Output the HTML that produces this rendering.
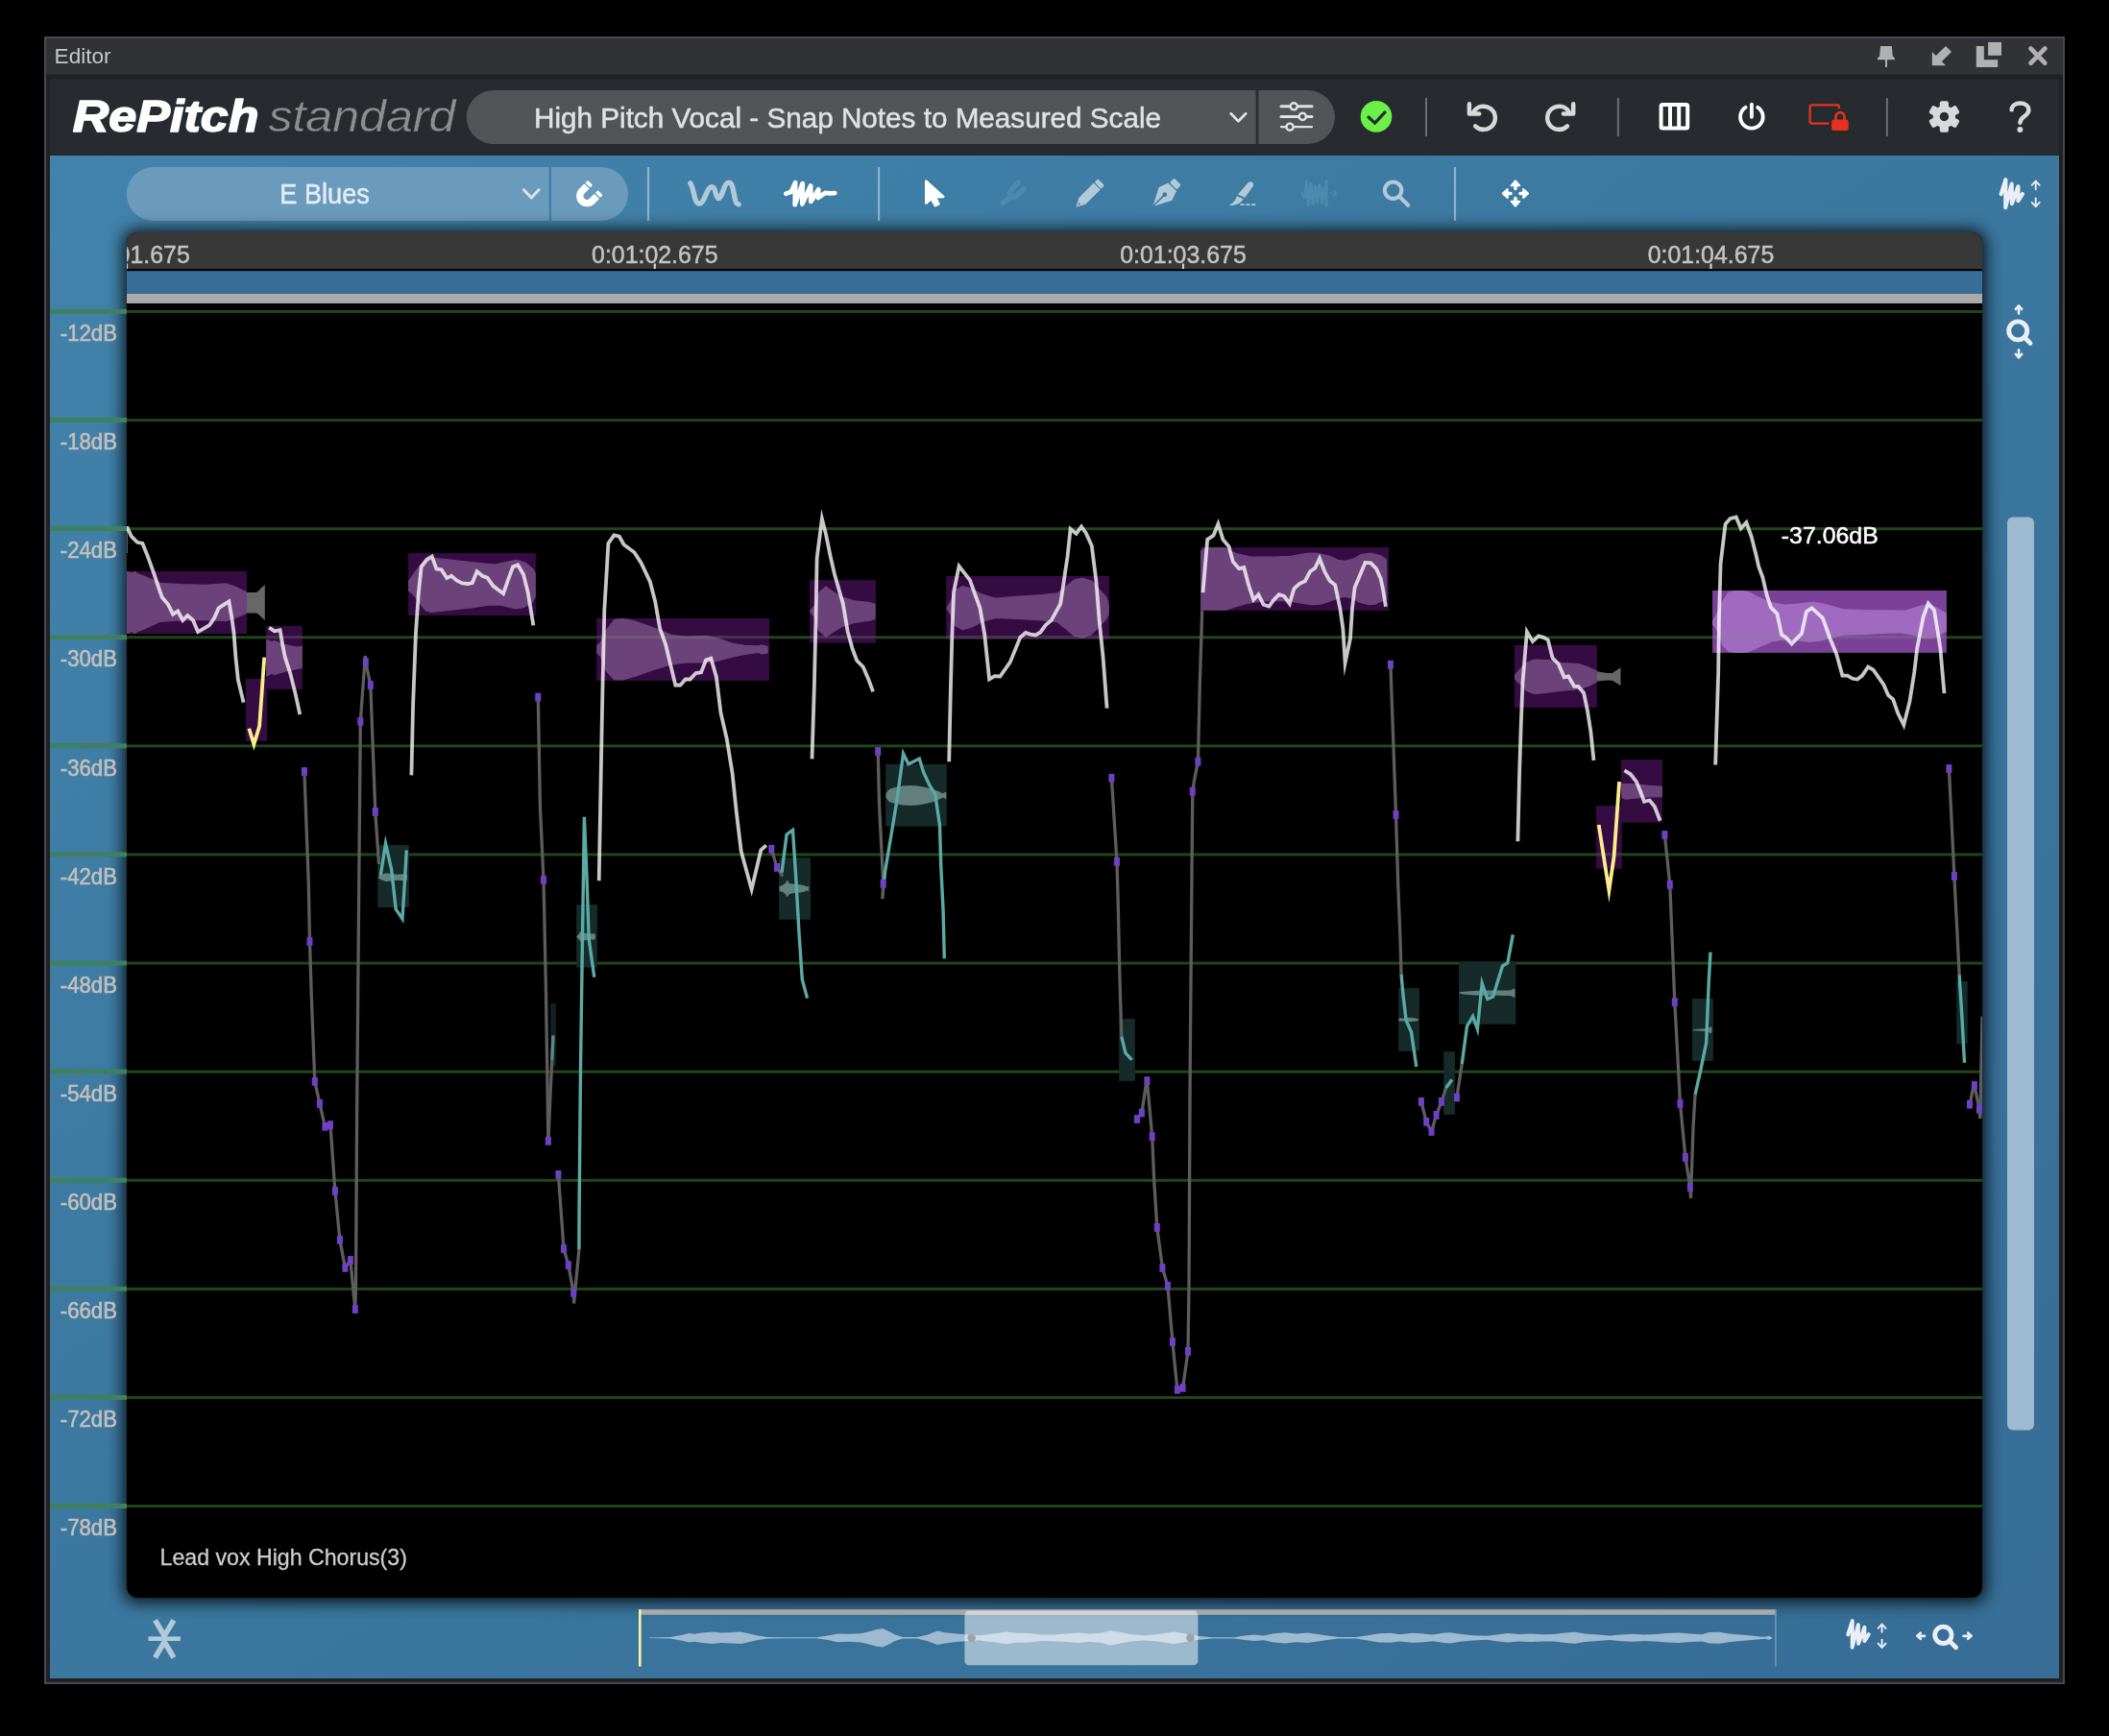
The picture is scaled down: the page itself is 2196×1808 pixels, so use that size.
<!DOCTYPE html>
<html><head><meta charset="utf-8"><title>Editor</title>
<style>html,body{margin:0;padding:0;background:#000;}svg{display:block;}</style>
</head><body>
<svg width="2196" height="1808" viewBox="0 0 2196 1808" font-family='"Liberation Sans", sans-serif'>
<defs>
<linearGradient id="blueg" x1="0" y1="0" x2="1" y2="1">
<stop offset="0" stop-color="#4283ab"/><stop offset="0.5" stop-color="#3b779f"/><stop offset="1" stop-color="#376d96"/>
</linearGradient>
<filter id="blur8" x="-5%" y="-5%" width="110%" height="110%"><feGaussianBlur stdDeviation="8.5"/></filter>
<clipPath id="plotclip"><rect x="132" y="242" width="1932" height="1422" rx="11" ry="11"/></clipPath>
<clipPath id="rulerclip"><rect x="132" y="242" width="1932" height="40"/></clipPath>
</defs>
<rect width="2196" height="1808" fill="#000"/>

<rect x="46" y="38" width="2104" height="1716" fill="#46494e"/>
<rect x="48" y="40" width="2100" height="1712" fill="#1f2123"/>
<rect x="48" y="40" width="2100" height="37.5" fill="#303236"/>
<text x="56.6" y="65.9" font-size="22" fill="#c9c9c9" text-anchor="start" opacity="0.995" font-weight="normal" font-style="normal" textLength="59" lengthAdjust="spacingAndGlyphs">Editor</text>
<rect x="52" y="82" width="2092" height="80" fill="#272b2f"/>
<rect x="52" y="162" width="2092" height="1586" fill="url(#blueg)"/>
<text x="75.7" y="137.4" font-size="46.3" fill="#ffffff" text-anchor="start" opacity="0.995" font-weight="bold" font-style="italic" textLength="194" lengthAdjust="spacingAndGlyphs" stroke="#fff" stroke-width="1.5" stroke-linejoin="round">RePitch</text>
<text x="279.4" y="136.8" font-size="47" fill="#8f8f8f" text-anchor="start" opacity="0.995" font-weight="normal" font-style="italic" textLength="195" lengthAdjust="spacingAndGlyphs" stroke="#272b2f" stroke-width="0.4" paint-order="fill">standard</text>
<rect x="485.7" y="94" width="904.3" height="56" rx="28" fill="#515557"/>
<rect x="1307.5" y="94" width="3" height="56" fill="#2b2e31"/>
<text x="556" y="132.8" font-size="30" fill="#e2e2e2" text-anchor="start" opacity="0.995" font-weight="normal" font-style="normal" textLength="653" lengthAdjust="spacingAndGlyphs" stroke="#e2e2e2" stroke-width="0.5">High Pitch Vocal - Snap Notes to Measured Scale</text>
<rect x="131.8" y="174" width="522.2" height="56" rx="28" fill="#6a9bbc"/>
<rect x="571.8" y="174" width="2.2" height="56" fill="#3f7ca5"/>
<text x="291.3" y="212" font-size="30" fill="#e4edf4" text-anchor="start" opacity="0.995" font-weight="normal" font-style="normal" textLength="93.6" lengthAdjust="spacingAndGlyphs" stroke="#e4edf4" stroke-width="0.5">E Blues</text>
<rect x="1484" y="102" width="2" height="40" fill="#6b6e71"/>
<rect x="1683.9" y="102" width="2" height="40" fill="#6b6e71"/>
<rect x="1963.9" y="102" width="2" height="40" fill="#6b6e71"/>
<rect x="673.9" y="174" width="2.2" height="56" fill="#8fb3cc"/>
<rect x="914" y="174" width="2.2" height="56" fill="#8fb3cc"/>
<rect x="1513.9" y="174" width="2.2" height="56" fill="#8fb3cc"/>
<rect x="129" y="240" width="1938" height="1428" rx="13" fill="#000" opacity="0.9" filter="url(#blur8)"/>
<g clip-path="url(#plotclip)">
<rect x="132" y="242" width="1932" height="1422" fill="#000"/>
<rect x="132" y="242" width="1932" height="38" fill="#383838"/>
<rect x="132" y="280" width="1932" height="2.2" fill="#000"/>
<rect x="132" y="282.2" width="1932" height="24" fill="#376d97"/>
<rect x="132" y="306" width="1932" height="10" fill="#aaaaaa"/>
</g>
<g clip-path="url(#rulerclip)">
<rect x="130.9" y="274.5" width="2.2" height="5.6" fill="#d0d0d0"/>
<text x="132" y="274.3" font-size="26" fill="#c4c4c4" text-anchor="middle" opacity="0.995" font-weight="normal" font-style="normal" textLength="131.5" lengthAdjust="spacingAndGlyphs" stroke="#c4c4c4" stroke-width="0.5">0:01:01.675</text>
<rect x="680.6999999999999" y="274.5" width="2.2" height="5.6" fill="#d0d0d0"/>
<text x="681.8" y="274.3" font-size="26" fill="#c4c4c4" text-anchor="middle" opacity="0.995" font-weight="normal" font-style="normal" textLength="131.5" lengthAdjust="spacingAndGlyphs" stroke="#c4c4c4" stroke-width="0.5">0:01:02.675</text>
<rect x="1230.9" y="274.5" width="2.2" height="5.6" fill="#d0d0d0"/>
<text x="1232" y="274.3" font-size="26" fill="#c4c4c4" text-anchor="middle" opacity="0.995" font-weight="normal" font-style="normal" textLength="131.5" lengthAdjust="spacingAndGlyphs" stroke="#c4c4c4" stroke-width="0.5">0:01:03.675</text>
<rect x="1780.4" y="274.5" width="2.2" height="5.6" fill="#d0d0d0"/>
<text x="1781.5" y="274.3" font-size="26" fill="#c4c4c4" text-anchor="middle" opacity="0.995" font-weight="normal" font-style="normal" textLength="131.5" lengthAdjust="spacingAndGlyphs" stroke="#c4c4c4" stroke-width="0.5">0:01:04.675</text>
</g>
<rect x="52" y="321.9" width="80" height="5" fill="#3f8060"/>
<text x="62.8" y="355.1" font-size="24" fill="#c6c0bc" text-anchor="start" opacity="0.995" font-weight="normal" font-style="normal" textLength="59.2" lengthAdjust="spacingAndGlyphs" stroke="#c6c0bc" stroke-width="0.6">-12dB</text>
<rect x="52" y="435.0" width="80" height="5" fill="#3f8060"/>
<text x="62.8" y="468.2" font-size="24" fill="#c6c0bc" text-anchor="start" opacity="0.995" font-weight="normal" font-style="normal" textLength="59.2" lengthAdjust="spacingAndGlyphs" stroke="#c6c0bc" stroke-width="0.6">-18dB</text>
<rect x="52" y="548.1" width="80" height="5" fill="#3f8060"/>
<text x="62.8" y="581.3" font-size="24" fill="#c6c0bc" text-anchor="start" opacity="0.995" font-weight="normal" font-style="normal" textLength="59.2" lengthAdjust="spacingAndGlyphs" stroke="#c6c0bc" stroke-width="0.6">-24dB</text>
<rect x="52" y="661.2" width="80" height="5" fill="#3f8060"/>
<text x="62.8" y="694.4" font-size="24" fill="#c6c0bc" text-anchor="start" opacity="0.995" font-weight="normal" font-style="normal" textLength="59.2" lengthAdjust="spacingAndGlyphs" stroke="#c6c0bc" stroke-width="0.6">-30dB</text>
<rect x="52" y="774.3" width="80" height="5" fill="#3f8060"/>
<text x="62.8" y="807.5" font-size="24" fill="#c6c0bc" text-anchor="start" opacity="0.995" font-weight="normal" font-style="normal" textLength="59.2" lengthAdjust="spacingAndGlyphs" stroke="#c6c0bc" stroke-width="0.6">-36dB</text>
<rect x="52" y="887.4" width="80" height="5" fill="#3f8060"/>
<text x="62.8" y="920.6" font-size="24" fill="#c6c0bc" text-anchor="start" opacity="0.995" font-weight="normal" font-style="normal" textLength="59.2" lengthAdjust="spacingAndGlyphs" stroke="#c6c0bc" stroke-width="0.6">-42dB</text>
<rect x="52" y="1000.5" width="80" height="5" fill="#3f8060"/>
<text x="62.8" y="1033.7" font-size="24" fill="#c6c0bc" text-anchor="start" opacity="0.995" font-weight="normal" font-style="normal" textLength="59.2" lengthAdjust="spacingAndGlyphs" stroke="#c6c0bc" stroke-width="0.6">-48dB</text>
<rect x="52" y="1113.6" width="80" height="5" fill="#3f8060"/>
<text x="62.8" y="1146.8" font-size="24" fill="#c6c0bc" text-anchor="start" opacity="0.995" font-weight="normal" font-style="normal" textLength="59.2" lengthAdjust="spacingAndGlyphs" stroke="#c6c0bc" stroke-width="0.6">-54dB</text>
<rect x="52" y="1226.7" width="80" height="5" fill="#3f8060"/>
<text x="62.8" y="1259.9" font-size="24" fill="#c6c0bc" text-anchor="start" opacity="0.995" font-weight="normal" font-style="normal" textLength="59.2" lengthAdjust="spacingAndGlyphs" stroke="#c6c0bc" stroke-width="0.6">-60dB</text>
<rect x="52" y="1339.8" width="80" height="5" fill="#3f8060"/>
<text x="62.8" y="1373.0" font-size="24" fill="#c6c0bc" text-anchor="start" opacity="0.995" font-weight="normal" font-style="normal" textLength="59.2" lengthAdjust="spacingAndGlyphs" stroke="#c6c0bc" stroke-width="0.6">-66dB</text>
<rect x="52" y="1452.9" width="80" height="5" fill="#3f8060"/>
<text x="62.8" y="1486.1" font-size="24" fill="#c6c0bc" text-anchor="start" opacity="0.995" font-weight="normal" font-style="normal" textLength="59.2" lengthAdjust="spacingAndGlyphs" stroke="#c6c0bc" stroke-width="0.6">-72dB</text>
<rect x="52" y="1566.0" width="80" height="5" fill="#3f8060"/>
<text x="62.8" y="1599.2" font-size="24" fill="#c6c0bc" text-anchor="start" opacity="0.995" font-weight="normal" font-style="normal" textLength="59.2" lengthAdjust="spacingAndGlyphs" stroke="#c6c0bc" stroke-width="0.6">-78dB</text>
<g clip-path="url(#plotclip)">
<rect x="132" y="323.0" width="1932" height="3" fill="#1f4619"/>
<rect x="132" y="436.1" width="1932" height="3" fill="#1f4619"/>
<rect x="132" y="549.2" width="1932" height="3" fill="#1f4619"/>
<rect x="132" y="662.3" width="1932" height="3" fill="#1f4619"/>
<rect x="132" y="775.4" width="1932" height="3" fill="#1f4619"/>
<rect x="132" y="888.5" width="1932" height="3" fill="#1f4619"/>
<rect x="132" y="1001.6" width="1932" height="3" fill="#1f4619"/>
<rect x="132" y="1114.7" width="1932" height="3" fill="#1f4619"/>
<rect x="132" y="1227.8" width="1932" height="3" fill="#1f4619"/>
<rect x="132" y="1340.9" width="1932" height="3" fill="#1f4619"/>
<rect x="132" y="1454.0" width="1932" height="3" fill="#1f4619"/>
<rect x="132" y="1567.1" width="1932" height="3" fill="#1f4619"/>
<rect x="132" y="595" width="125.0" height="65.0" fill="#350c42"/>
<clipPath id="bc132"><rect x="132" y="595" width="125.0" height="65.0"/></clipPath>
<g clip-path="url(#bc132)"><polygon points="132.0,595.0 137.7,597.2 140.2,594.7 142.1,597.2 150.3,600.4 166.8,607.4 188.4,608.7 213.7,609.3 235.3,607.8 245.4,611.2 257.0,616.9 257.0,638.4 245.4,643.5 235.3,646.7 213.7,645.4 188.4,646.0 166.8,647.3 150.3,654.9 142.1,658.1 140.2,660.6 137.7,657.4 132.0,660.6" fill="#6c427b" stroke="#6c427b" stroke-width="1.2" stroke-linejoin="round"/></g>
<polygon points="257.0,616.9 265.7,616.9 268.2,616.3 275.8,608.7 275.8,646.0 268.2,639.1 265.7,638.4 257.0,638.4" fill="#676767"/>
<rect x="277.1" y="652" width="37.7" height="65.9" fill="#350c42"/>
<clipPath id="bc277"><rect x="277.1" y="652" width="37.7" height="65.9"/></clipPath>
<g clip-path="url(#bc277)"><polygon points="277.1,666.3 283.4,668.8 285.3,667.6 296.1,671.4 308.8,674.2 314.8,673.3 314.8,695.5 308.8,696.7 296.1,699.3 285.3,702.4 283.4,701.2 277.1,704.3" fill="#6c427b" stroke="#6c427b" stroke-width="1.2" stroke-linejoin="round"/></g>
<rect x="425.1" y="576.1" width="132.7" height="64.9" fill="#350c42"/>
<clipPath id="bc425"><rect x="425.1" y="576.1" width="132.7" height="64.9"/></clipPath>
<g clip-path="url(#bc425)"><polygon points="425.4,605.5 432.1,596.0 439.7,586.6 449.1,581.2 462.4,582.4 490.9,585.6 515.5,588.1 528.8,585.0 538.3,583.3 547.8,586.6 555.3,593.2 557.8,597.9 557.8,620.7 553.5,628.3 544.0,633.0 536.4,633.6 521.2,630.2 509.8,629.8 490.9,633.0 471.9,634.9 449.1,637.4 443.4,635.9 435.9,626.4 430.2,618.8 425.4,615.0" fill="#6c427b" stroke="#6c427b" stroke-width="1.2" stroke-linejoin="round"/></g>
<rect x="621.2" y="644" width="179.8" height="64.9" fill="#350c42"/>
<clipPath id="bc621"><rect x="621.2" y="644" width="179.8" height="64.9"/></clipPath>
<g clip-path="url(#bc621)"><polygon points="621.2,672.8 625.5,669.1 631.2,656.7 639.8,645.3 648.3,644.4 661.6,647.2 680.5,653.9 699.5,661.5 714.7,663.4 735.5,662.4 748.8,665.3 762.1,670.0 775.4,672.3 789.6,672.8 792.4,671.9 799.1,673.4 799.1,680.1 792.4,680.8 789.6,679.5 775.4,681.4 762.1,684.2 748.8,688.0 735.5,689.9 714.7,689.9 699.5,691.8 680.5,697.5 661.6,704.1 648.3,707.9 639.8,707.9 631.2,698.5 625.5,683.3 621.2,679.5" fill="#6c427b" stroke="#6c427b" stroke-width="1.2" stroke-linejoin="round"/></g>
<rect x="843.1" y="604.2" width="68.8" height="65.4" fill="#350c42"/>
<clipPath id="bc843"><rect x="843.1" y="604.2" width="68.8" height="65.4"/></clipPath>
<g clip-path="url(#bc843)"><polygon points="843.1,636.4 847.9,631.6 852.7,617.1 860.0,611.0 867.2,616.3 876.9,622.2 889.8,625.9 905.9,627.6 911.1,629.2 911.1,644.5 905.9,646.1 889.8,648.5 876.9,652.5 867.2,658.2 860.0,663.0 852.7,656.6 847.9,642.1" fill="#6c427b" stroke="#6c427b" stroke-width="1.2" stroke-linejoin="round"/></g>
<rect x="985.2" y="600" width="169.8" height="65.9" fill="#350c42"/>
<clipPath id="bc985"><rect x="985.2" y="600" width="169.8" height="65.9"/></clipPath>
<g clip-path="url(#bc985)"><polygon points="985.7,633.2 989.8,626.8 994.6,614.7 1002.7,610.6 1010.7,613.0 1022.0,618.7 1036.5,623.2 1060.7,621.1 1084.9,619.5 1101.0,617.9 1109.1,611.4 1118.7,603.9 1126.8,602.2 1136.5,605.0 1144.5,613.9 1151.8,621.9 1154.2,630.0 1154.2,639.6 1151.8,644.5 1144.5,652.5 1136.5,660.6 1126.8,664.2 1118.7,662.2 1109.1,654.2 1101.0,647.7 1084.9,645.8 1060.7,644.5 1036.5,643.4 1022.0,647.7 1010.7,653.4 1002.7,655.8 994.6,651.7 989.8,639.6" fill="#6c427b" stroke="#6c427b" stroke-width="1.2" stroke-linejoin="round"/></g>
<rect x="1250.1" y="570" width="195.9" height="65.8" fill="#350c42"/>
<clipPath id="bc1250"><rect x="1250.1" y="570" width="195.9" height="65.8"/></clipPath>
<g clip-path="url(#bc1250)"><polygon points="1250.1,574.4 1253.6,571.3 1264.0,568.7 1274.4,570.3 1286.9,576.5 1302.6,580.2 1323.5,580.2 1344.3,579.4 1360.0,576.3 1370.4,576.0 1384.0,579.1 1393.3,583.3 1400.6,584.3 1409.0,582.2 1417.3,577.6 1427.8,576.0 1438.2,579.1 1443.4,582.8 1443.9,623.5 1438.2,626.1 1431.9,629.2 1425.7,629.7 1415.3,627.1 1406.9,622.4 1398.6,621.4 1389.2,624.5 1375.6,629.2 1365.2,629.7 1354.8,628.1 1344.3,626.1 1328.7,625.5 1313.0,626.1 1297.4,628.7 1283.8,632.8 1271.3,637.0 1264.0,637.5 1258.8,635.5 1253.6,636.5 1250.1,635.5" fill="#6c427b" stroke="#6c427b" stroke-width="1.2" stroke-linejoin="round"/></g>
<rect x="1576.9" y="671.9" width="86.0" height="65.0" fill="#350c42"/>
<clipPath id="bc1576"><rect x="1576.9" y="671.9" width="86.0" height="65.0"/></clipPath>
<g clip-path="url(#bc1576)"><polygon points="1577.3,703.5 1583.0,696.6 1589.0,690.6 1597.6,687.1 1611.5,687.7 1627.0,690.6 1644.3,691.5 1654.6,695.3 1662.9,699.2 1662.9,709.6 1654.6,714.3 1644.3,717.7 1627.0,719.1 1611.5,721.2 1597.6,722.6 1589.0,719.1 1583.0,712.2 1577.3,707.0" fill="#6c427b" stroke="#6c427b" stroke-width="1.2" stroke-linejoin="round"/></g>
<polygon points="1662.9,699.2 1673.6,701.0 1678.8,701.0 1687.5,695.3 1687.5,713.9 1678.8,708.7 1673.6,708.4 1662.9,709.6" fill="#676767"/>
<rect x="1688" y="791.1" width="43.0" height="65.5" fill="#350c42"/>
<clipPath id="bc1688"><rect x="1688" y="791.1" width="43.0" height="65.5"/></clipPath>
<g clip-path="url(#bc1688)"><polygon points="1688.8,816.7 1699.6,816.7 1716.8,818.4 1731.0,819.3 1731.0,829.7 1716.8,830.0 1699.6,831.4 1692.6,832.2 1688.8,830.5" fill="#6c427b" stroke="#6c427b" stroke-width="1.2" stroke-linejoin="round"/></g>
<rect x="1783.1" y="615" width="243.8" height="64.9" fill="#7a4197"/>
<clipPath id="bc1783"><rect x="1783.1" y="615" width="243.8" height="64.9"/></clipPath>
<g clip-path="url(#bc1783)"><polygon points="1783.5,646.9 1788.5,638.4 1794.2,625.6 1799.9,617.0 1809.8,614.9 1819.8,616.3 1831.2,622.0 1844.0,627.7 1858.2,630.1 1872.4,629.1 1888.1,627.0 1900.9,629.5 1919.4,634.8 1940.7,635.5 1969.1,635.8 1983.4,636.2 1994.8,632.7 2006.1,629.8 2014.7,632.0 2023.2,636.9 2026.9,639.1 2026.9,656.9 2020.4,661.1 2011.8,664.7 2003.3,664.7 1991.9,661.1 1980.5,659.0 1969.1,659.0 1940.7,660.4 1919.4,661.1 1906.6,664.0 1895.2,667.5 1883.8,668.2 1872.4,666.8 1855.3,666.1 1844.0,668.2 1831.2,673.9 1819.8,678.9 1809.8,680.3 1799.9,678.2 1794.2,672.5 1788.5,656.9 1783.5,649.7" fill="#9f6abf" stroke="#9f6abf" stroke-width="1.2" stroke-linejoin="round"/></g>
<rect x="256" y="707" width="22.0" height="64.8" fill="#350c42"/>
<rect x="1662.1" y="839.1" width="26.7" height="65.5" fill="#350c42"/>
<rect x="277.1" y="662.0" width="37.7" height="3.2" fill="rgba(120,150,110,0.28)"/>
<rect x="621.2" y="662.0" width="179.8" height="3.2" fill="rgba(120,150,110,0.28)"/>
<rect x="843.1" y="662.0" width="68.8" height="3.2" fill="rgba(120,150,110,0.28)"/>
<rect x="985.2" y="662.0" width="169.8" height="3.2" fill="rgba(120,150,110,0.28)"/>
<rect x="1783.1" y="662.0" width="243.8" height="3.2" fill="rgba(120,150,110,0.28)"/>
<rect x="1662.1" y="888.2" width="26.7" height="3.2" fill="rgba(120,150,110,0.28)"/>
<rect x="393.2" y="880.1" width="32.7" height="64.9" fill="#152a29"/>
<polygon points="394.0,912.7 398.0,910.7 402.0,909.2 408.0,910.2 414.0,910.7 420.0,910.2 424.0,910.7 424.0,916.7 420.0,917.2 414.0,916.7 408.0,917.2 402.0,918.2 398.0,916.7 394.0,914.7" fill="#62807d"/>
<rect x="600.2" y="942.1" width="21.7" height="65.5" fill="#152a29"/>
<polygon points="600.5,975.0 603.0,972.5 605.0,969.5 607.0,971.5 612.0,972.0 616.0,972.5 619.0,972.0 620.0,974.5 620.0,976.5 619.0,979.0 616.0,978.5 612.0,979.0 607.0,979.5 605.0,981.5 603.0,978.5 600.5,976.0" fill="#62807d"/>
<rect x="811.1" y="893.2" width="32.9" height="64.6" fill="#152a29"/>
<polygon points="811.5,922.9 815.0,921.9 818.0,919.4 819.5,916.4 822.0,919.9 828.0,920.9 834.0,921.4 838.0,922.4 840.0,923.6 841.5,922.4 842.0,922.9 842.0,927.9 841.5,928.4 840.0,927.2 838.0,928.4 834.0,929.4 828.0,929.9 822.0,930.9 819.5,934.4 818.0,931.4 815.0,928.9 811.5,927.9" fill="#62807d"/>
<rect x="922.2" y="795.8" width="63.6" height="64.8" fill="#152a29"/>
<polygon points="922.5,826.4 925.0,822.9 927.0,821.4 932.0,819.9 940.0,818.4 948.0,817.9 956.0,818.4 964.0,819.9 972.0,821.9 978.0,824.4 981.0,825.9 983.0,825.9 984.5,824.4 985.3,825.4 985.3,831.4 984.5,832.4 983.0,830.9 981.0,830.9 978.0,832.4 972.0,834.9 964.0,836.9 956.0,838.4 948.0,838.9 940.0,838.4 932.0,836.9 927.0,835.4 925.0,833.9 922.5,830.4" fill="#62807d"/>
<rect x="1165.1" y="1061" width="16.7" height="64.9" fill="#152a29"/>
<rect x="1456.1" y="1029.1" width="21.8" height="65.6" fill="#152a29"/>
<polygon points="1456.5,1060.6 1462.0,1060.4 1468.0,1059.8 1474.0,1060.4 1477.0,1061.2 1477.0,1062.8 1474.0,1063.6 1468.0,1064.2 1462.0,1063.6 1456.5,1063.4" fill="#62807d"/>
<rect x="1503.1" y="1095.1" width="11.8" height="65.6" fill="#152a29"/>
<rect x="1519" y="1001.3" width="59.3" height="65.5" fill="#152a29"/>
<polygon points="1519.5,1033.6 1524.0,1032.8 1534.0,1032.0 1548.0,1031.6 1560.0,1031.6 1570.0,1031.4 1574.0,1031.2 1575.5,1029.7 1577.5,1029.7 1577.5,1038.7 1575.5,1038.7 1574.0,1037.2 1570.0,1037.0 1560.0,1036.8 1548.0,1036.8 1534.0,1036.4 1524.0,1035.6 1519.5,1034.8" fill="#62807d"/>
<rect x="1761.9" y="1040" width="22.0" height="64.9" fill="#152a29"/>
<polygon points="1762.5,1072.2 1768.0,1071.8 1774.0,1071.4 1779.0,1070.9 1780.5,1069.5 1782.5,1069.7 1782.5,1075.7 1780.5,1075.9 1779.0,1074.5 1774.0,1074.0 1768.0,1073.6 1762.5,1073.2" fill="#62807d"/>
<rect x="2037.3" y="1021.9" width="11.4" height="65.1" fill="#152a29"/>
<rect x="573.3" y="1045" width="5.6" height="66.0" fill="#0f2322"/>
<polyline points="316.9,803.5 321.3,920.0 322.5,980.5 324.4,1041.0 327.8,1126.3 332.9,1149.3 338.4,1173.3 344.0,1171.6 348.9,1240.4 353.9,1291.4 359.4,1320.4 364.9,1312.5 369.8,1363.5" fill="none" stroke="#5d5d5d" stroke-width="3.3" stroke-linejoin="miter" stroke-linecap="butt" stroke-miterlimit="5"/>
<polyline points="369.8,1363.5 370.5,1340.0 371.6,1162.0 373.4,960.0 375.3,751.5 380.3,683.0 380.8,689.5 385.8,713.5 390.8,845.4 394.5,900.0" fill="none" stroke="#5d5d5d" stroke-width="3.3" stroke-linejoin="miter" stroke-linecap="butt" stroke-miterlimit="5"/>
<polyline points="560.3,726.1 562.4,840.0 566.0,916.4 568.5,1033.5 570.9,1188.3" fill="none" stroke="#5d5d5d" stroke-width="3.3" stroke-linejoin="miter" stroke-linecap="butt" stroke-miterlimit="5"/>
<polyline points="570.9,1188.3 573.5,1130.0 576.0,1078.3" fill="none" stroke="#5d5d5d" stroke-width="3.3" stroke-linejoin="miter" stroke-linecap="butt" stroke-miterlimit="5"/>
<polyline points="581.4,1223.4 587.0,1300.5 591.9,1317.6 597.2,1346.4 597.6,1357.5 602.9,1301.5" fill="none" stroke="#5d5d5d" stroke-width="3.3" stroke-linejoin="miter" stroke-linecap="butt" stroke-miterlimit="5"/>
<polyline points="803.3,884.3 809.0,903.4 815.0,912.6" fill="none" stroke="#5d5d5d" stroke-width="3.3" stroke-linejoin="miter" stroke-linecap="butt" stroke-miterlimit="5"/>
<polyline points="914.2,782.5 915.6,840.0 919.7,920.3 918.9,936.0 920.5,915.0" fill="none" stroke="#5d5d5d" stroke-width="3.3" stroke-linejoin="miter" stroke-linecap="butt" stroke-miterlimit="5"/>
<polyline points="1157.4,810.3 1163.0,897.4 1164.2,940.0 1165.9,1016.8 1167.8,1079.7" fill="none" stroke="#5d5d5d" stroke-width="3.3" stroke-linejoin="miter" stroke-linecap="butt" stroke-miterlimit="5"/>
<polyline points="1184.0,1165.5 1188.9,1159.0 1194.4,1122.0 1194.4,1125.6 1199.7,1183.7 1201.7,1229.6 1204.8,1278.4 1210.4,1320.5 1215.9,1339.3 1220.9,1397.5 1225.9,1447.3 1231.6,1445.3 1237.0,1407.4 1238.0,1339.6 1239.2,1113.5 1240.9,920.0 1241.8,824.3 1243.3,813.9 1247.4,793.3 1249.3,713.5 1251.7,636.1" fill="none" stroke="#5d5d5d" stroke-width="3.3" stroke-linejoin="miter" stroke-linecap="butt" stroke-miterlimit="5"/>
<polyline points="1447.9,692.2 1453.5,848.5 1455.7,920.0 1458.1,980.5 1459.0,1014.3" fill="none" stroke="#5d5d5d" stroke-width="3.3" stroke-linejoin="miter" stroke-linecap="butt" stroke-miterlimit="5"/>
<polyline points="1479.9,1147.4 1485.2,1168.4 1490.5,1178.4 1495.6,1161.4 1500.9,1147.4 1505.7,1132.9" fill="none" stroke="#5d5d5d" stroke-width="3.3" stroke-linejoin="miter" stroke-linecap="butt" stroke-miterlimit="5"/>
<polyline points="1516.9,1143.0 1522.2,1108.2" fill="none" stroke="#5d5d5d" stroke-width="3.3" stroke-linejoin="miter" stroke-linecap="butt" stroke-miterlimit="5"/>
<polyline points="1733.4,869.5 1738.8,921.4 1743.8,1043.7 1749.5,1149.4 1754.9,1205.4 1759.9,1236.4 1760.5,1248.0 1763.1,1172.5 1765.1,1139.8" fill="none" stroke="#5d5d5d" stroke-width="3.3" stroke-linejoin="miter" stroke-linecap="butt" stroke-miterlimit="5"/>
<polyline points="2029.4,800.5 2034.9,912.4 2038.1,974.3 2040.1,1015.2" fill="none" stroke="#5d5d5d" stroke-width="3.3" stroke-linejoin="miter" stroke-linecap="butt" stroke-miterlimit="5"/>
<polyline points="2051.0,1150.2 2055.9,1127.0 2055.9,1130.4 2060.9,1155.1 2061.9,1165.0 2064.0,1058.5" fill="none" stroke="#5d5d5d" stroke-width="3.3" stroke-linejoin="miter" stroke-linecap="butt" stroke-miterlimit="5"/>
<polyline points="396.3,911.8 401.5,878.6 407.6,905.4 412.2,946.9 419.0,957.0 421.4,918.3 423.3,885.5" fill="none" stroke="#5aaaa5" stroke-width="3.4" stroke-linejoin="miter" stroke-linecap="butt" stroke-miterlimit="8"/>
<polyline points="602.9,1301.5 603.1,1260.0 604.5,1113.5 606.0,1009.3 608.4,850.9 610.8,907.7 613.2,977.9 618.8,1017.8" fill="none" stroke="#5aaaa5" stroke-width="3.4" stroke-linejoin="miter" stroke-linecap="butt" stroke-miterlimit="8"/>
<polyline points="814.0,908.9 819.1,869.2 825.5,864.4 828.5,910.0 832.1,973.0 835.3,1020.2 840.6,1039.6" fill="none" stroke="#5aaaa5" stroke-width="3.4" stroke-linejoin="miter" stroke-linecap="butt" stroke-miterlimit="8"/>
<polyline points="920.3,920.0 921.7,907.0 925.4,885.0 933.8,834.5 940.6,784.9 945.9,795.8 957.3,790.2 961.6,804.2 967.7,817.5 973.7,827.2 978.5,859.4 979.7,900.5 982.1,948.9 983.3,998.4" fill="none" stroke="#5aaaa5" stroke-width="3.4" stroke-linejoin="miter" stroke-linecap="butt" stroke-miterlimit="8"/>
<polyline points="1167.8,1079.7 1171.9,1096.6 1178.7,1103.8" fill="none" stroke="#5aaaa5" stroke-width="3.4" stroke-linejoin="miter" stroke-linecap="butt" stroke-miterlimit="8"/>
<polyline points="1459.0,1014.3 1461.0,1036.1 1464.1,1062.7 1469.5,1074.8 1474.8,1111.1" fill="none" stroke="#5aaaa5" stroke-width="3.4" stroke-linejoin="miter" stroke-linecap="butt" stroke-miterlimit="8"/>
<polyline points="1505.7,1132.9 1511.8,1124.4" fill="none" stroke="#5aaaa5" stroke-width="3.4" stroke-linejoin="miter" stroke-linecap="butt" stroke-miterlimit="8"/>
<polyline points="1522.2,1108.2 1527.5,1068.8 1533.6,1058.4 1538.4,1071.9 1543.2,1024.0 1548.8,1040.5 1554.6,1038.0 1564.5,1005.9 1569.8,1003.0 1575.3,973.4" fill="none" stroke="#5aaaa5" stroke-width="3.4" stroke-linejoin="miter" stroke-linecap="butt" stroke-miterlimit="8"/>
<polyline points="1765.1,1139.8 1770.6,1115.5 1776.7,1085.8 1779.2,1023.9 1781.0,991.7" fill="none" stroke="#5aaaa5" stroke-width="3.4" stroke-linejoin="miter" stroke-linecap="butt" stroke-miterlimit="8"/>
<polyline points="2040.1,1015.2 2043.0,1061.0 2045.5,1106.8" fill="none" stroke="#5aaaa5" stroke-width="3.4" stroke-linejoin="miter" stroke-linecap="butt" stroke-miterlimit="8"/>
<polyline points="574.8,1104.0 576.0,1078.3" fill="none" stroke="rgba(90,170,165,0.55)" stroke-width="3.2" stroke-linejoin="miter" stroke-linecap="butt" stroke-miterlimit="16"/>
<rect x="313.9" y="799.1" width="6" height="8.8" fill="#6f3fc4"/>
<rect x="319.5" y="976.1" width="6" height="8.8" fill="#6f3fc4"/>
<rect x="324.8" y="1121.9" width="6" height="8.8" fill="#6f3fc4"/>
<rect x="329.9" y="1144.9" width="6" height="8.8" fill="#6f3fc4"/>
<rect x="335.4" y="1168.9" width="6" height="8.8" fill="#6f3fc4"/>
<rect x="341.0" y="1167.2" width="6" height="8.8" fill="#6f3fc4"/>
<rect x="345.9" y="1236.0" width="6" height="8.8" fill="#6f3fc4"/>
<rect x="350.9" y="1287.0" width="6" height="8.8" fill="#6f3fc4"/>
<rect x="356.4" y="1316.0" width="6" height="8.8" fill="#6f3fc4"/>
<rect x="361.9" y="1308.1" width="6" height="8.8" fill="#6f3fc4"/>
<rect x="366.8" y="1359.1" width="6" height="8.8" fill="#6f3fc4"/>
<rect x="372.3" y="747.1" width="6" height="8.8" fill="#6f3fc4"/>
<rect x="377.8" y="685.1" width="6" height="8.8" fill="#6f3fc4"/>
<rect x="382.8" y="709.1" width="6" height="8.8" fill="#6f3fc4"/>
<rect x="387.8" y="841.0" width="6" height="8.8" fill="#6f3fc4"/>
<rect x="557.3" y="721.7" width="6" height="8.8" fill="#6f3fc4"/>
<rect x="563.0" y="912.0" width="6" height="8.8" fill="#6f3fc4"/>
<rect x="567.9" y="1183.9" width="6" height="8.8" fill="#6f3fc4"/>
<rect x="578.4" y="1219.0" width="6" height="8.8" fill="#6f3fc4"/>
<rect x="584.0" y="1296.1" width="6" height="8.8" fill="#6f3fc4"/>
<rect x="588.9" y="1313.2" width="6" height="8.8" fill="#6f3fc4"/>
<rect x="594.2" y="1342.0" width="6" height="8.8" fill="#6f3fc4"/>
<rect x="800.3" y="879.9" width="6" height="8.8" fill="#6f3fc4"/>
<rect x="806.0" y="899.0" width="6" height="8.8" fill="#6f3fc4"/>
<rect x="911.2" y="778.1" width="6" height="8.8" fill="#6f3fc4"/>
<rect x="916.7" y="915.9" width="6" height="8.8" fill="#6f3fc4"/>
<rect x="1154.4" y="805.9" width="6" height="8.8" fill="#6f3fc4"/>
<rect x="1160.0" y="893.0" width="6" height="8.8" fill="#6f3fc4"/>
<rect x="1181.0" y="1161.1" width="6" height="8.8" fill="#6f3fc4"/>
<rect x="1185.9" y="1154.6" width="6" height="8.8" fill="#6f3fc4"/>
<rect x="1191.4" y="1121.2" width="6" height="8.8" fill="#6f3fc4"/>
<rect x="1196.7" y="1179.3" width="6" height="8.8" fill="#6f3fc4"/>
<rect x="1201.8" y="1274.0" width="6" height="8.8" fill="#6f3fc4"/>
<rect x="1207.4" y="1316.1" width="6" height="8.8" fill="#6f3fc4"/>
<rect x="1212.9" y="1334.9" width="6" height="8.8" fill="#6f3fc4"/>
<rect x="1217.9" y="1393.1" width="6" height="8.8" fill="#6f3fc4"/>
<rect x="1222.9" y="1442.9" width="6" height="8.8" fill="#6f3fc4"/>
<rect x="1228.6" y="1440.9" width="6" height="8.8" fill="#6f3fc4"/>
<rect x="1234.0" y="1403.0" width="6" height="8.8" fill="#6f3fc4"/>
<rect x="1238.8" y="819.9" width="6" height="8.8" fill="#6f3fc4"/>
<rect x="1244.4" y="788.9" width="6" height="8.8" fill="#6f3fc4"/>
<rect x="1444.9" y="687.8" width="6" height="8.8" fill="#6f3fc4"/>
<rect x="1450.5" y="844.1" width="6" height="8.8" fill="#6f3fc4"/>
<rect x="1476.9" y="1143.0" width="6" height="8.8" fill="#6f3fc4"/>
<rect x="1482.2" y="1164.0" width="6" height="8.8" fill="#6f3fc4"/>
<rect x="1487.5" y="1174.0" width="6" height="8.8" fill="#6f3fc4"/>
<rect x="1492.6" y="1157.0" width="6" height="8.8" fill="#6f3fc4"/>
<rect x="1497.9" y="1143.0" width="6" height="8.8" fill="#6f3fc4"/>
<rect x="1513.9" y="1138.6" width="6" height="8.8" fill="#6f3fc4"/>
<rect x="1730.4" y="865.1" width="6" height="8.8" fill="#6f3fc4"/>
<rect x="1735.8" y="917.0" width="6" height="8.8" fill="#6f3fc4"/>
<rect x="1740.8" y="1039.3" width="6" height="8.8" fill="#6f3fc4"/>
<rect x="1746.5" y="1145.0" width="6" height="8.8" fill="#6f3fc4"/>
<rect x="1751.9" y="1201.0" width="6" height="8.8" fill="#6f3fc4"/>
<rect x="1756.9" y="1232.0" width="6" height="8.8" fill="#6f3fc4"/>
<rect x="2026.4" y="796.1" width="6" height="8.8" fill="#6f3fc4"/>
<rect x="2031.9" y="908.0" width="6" height="8.8" fill="#6f3fc4"/>
<rect x="2048.0" y="1145.8" width="6" height="8.8" fill="#6f3fc4"/>
<rect x="2052.9" y="1126.0" width="6" height="8.8" fill="#6f3fc4"/>
<rect x="2057.9" y="1150.7" width="6" height="8.8" fill="#6f3fc4"/>
<polyline points="132.3,548.0 132.3,576.0" fill="none" stroke="#555" stroke-width="1.4" stroke-linejoin="miter" stroke-linecap="butt" stroke-miterlimit="16"/>
<polyline points="132.1,548.5 136.9,558.7 143.0,564.8 148.4,566.0 154.1,580.1 160.5,597.9 164.3,609.3 168.7,622.0 175.1,629.6 180.1,639.7 185.2,636.5 190.3,646.0 195.3,641.0 201.0,646.0 206.1,658.1 218.1,651.1 223.2,643.5 227.6,633.4 238.4,626.4 241.0,641.0 243.5,658.7 245.4,684.1 247.9,708.1 253.6,731.6" fill="none" stroke="rgba(255,255,255,0.78)" stroke-width="3.8" stroke-linejoin="miter" stroke-linecap="butt" stroke-miterlimit="16"/>
<polyline points="280.2,653.6 285.9,657.4 291.6,656.2 294.2,671.4 296.7,684.1 302.4,701.8 307.5,722.1 312.3,744.2" fill="none" stroke="rgba(255,255,255,0.78)" stroke-width="3.8" stroke-linejoin="miter" stroke-linecap="butt" stroke-miterlimit="16"/>
<polyline points="428.4,807.4 430.1,733.8 433.0,658.6 435.9,616.9 438.7,590.3 444.4,582.8 449.7,579.5 454.5,592.6 459.6,593.2 465.3,602.1 470.0,599.8 475.7,604.6 481.4,607.4 487.1,608.0 491.8,607.0 496.6,595.1 502.2,599.8 507.4,601.7 513.6,610.3 518.4,614.1 524.1,618.2 528.8,604.6 534.1,590.3 539.2,588.4 544.9,597.9 549.7,616.9 555.4,651.4" fill="none" stroke="rgba(255,255,255,0.78)" stroke-width="3.8" stroke-linejoin="miter" stroke-linecap="butt" stroke-miterlimit="16"/>
<polyline points="623.7,917.2 626.1,786.1 627.4,720.0 629.3,635.9 631.2,603.6 633.4,566.0 639.4,557.5 644.8,558.7 649.6,567.2 660.5,575.2 667.7,586.5 676.9,605.9 682.2,626.4 687.1,654.3 693.1,671.2 699.2,696.6 703.3,713.5 708.4,713.5 713.7,707.5 718.5,707.5 724.6,701.0 730.1,700.2 735.0,687.6 740.3,685.7 745.9,705.0 750.5,742.5 756.7,769.2 762.6,805.4 766.9,846.6 771.7,886.5 782.6,926.4 792.3,885.3 797.9,880.4" fill="none" stroke="rgba(255,255,255,0.78)" stroke-width="3.8" stroke-linejoin="miter" stroke-linecap="butt" stroke-miterlimit="16"/>
<polyline points="845.5,790.4 847.9,713.5 849.5,644.5 850.6,581.6 855.9,540.2 860.0,556.3 864.8,580.0 868.9,597.7 877.7,628.4 882.6,657.4 887.4,675.1 892.2,688.0 898.7,694.5 904.3,707.4 909.1,720.3" fill="none" stroke="rgba(255,255,255,0.78)" stroke-width="3.8" stroke-linejoin="miter" stroke-linecap="butt" stroke-miterlimit="16"/>
<polyline points="988.2,793.3 989.8,720.0 991.4,660.6 993.0,617.1 998.6,589.7 1009.9,604.2 1020.4,633.2 1025.2,660.6 1030.1,707.4 1035.7,704.1 1041.3,704.5 1051.8,689.6 1062.3,663.8 1067.9,659.0 1072.8,660.6 1078.4,661.4 1083.3,658.5 1088.9,650.9 1094.6,646.1 1104.2,628.9 1106.8,612.0 1109.1,596.1 1111.5,580.0 1114.6,551.0 1120.6,555.8 1126.0,548.5 1130.8,555.1 1136.8,568.4 1141.3,604.2 1144.5,644.5 1148.6,684.8 1152.6,737.7" fill="none" stroke="rgba(255,255,255,0.78)" stroke-width="3.8" stroke-linejoin="miter" stroke-linecap="butt" stroke-miterlimit="16"/>
<polyline points="1252.5,617.2 1255.1,586.9 1257.2,561.9 1263.5,557.7 1268.4,545.7 1273.4,561.9 1279.6,569.2 1283.8,584.9 1290.1,592.2 1295.3,591.1 1300.0,608.9 1305.2,624.5 1310.4,619.3 1315.6,629.7 1321.4,631.6 1326.6,624.5 1331.8,619.1 1337.0,620.8 1342.8,628.7 1347.4,613.0 1353.2,607.8 1358.9,605.2 1364.1,595.3 1369.4,591.6 1374.0,581.7 1379.3,595.3 1384.5,604.7 1390.2,609.4 1395.4,633.9 1398.4,655.0 1400.6,690.5 1406.0,665.1 1408.0,633.9 1410.6,612.0 1421.5,585.9 1427.3,586.4 1433.0,592.2 1437.7,602.6 1440.3,615.1 1442.9,631.8" fill="none" stroke="rgba(255,255,255,0.78)" stroke-width="3.8" stroke-linejoin="miter" stroke-linecap="butt" stroke-miterlimit="16"/>
<polyline points="1580.4,876.3 1582.1,805.5 1583.8,753.6 1585.5,710.5 1589.9,657.8 1595.9,668.1 1602.0,662.4 1607.1,663.8 1611.8,666.4 1616.6,685.4 1622.7,691.5 1628.7,705.3 1633.1,704.4 1639.1,714.8 1643.4,714.8 1649.1,721.7 1652.9,739.8 1656.4,762.3 1659.5,792.0" fill="none" stroke="rgba(255,255,255,0.78)" stroke-width="3.8" stroke-linejoin="miter" stroke-linecap="butt" stroke-miterlimit="16"/>
<polyline points="1691.4,802.4 1697.8,806.3 1703.9,814.1 1708.2,824.5 1712.0,834.8 1717.7,833.5 1722.9,840.0 1728.6,854.7" fill="none" stroke="rgba(255,255,255,0.78)" stroke-width="3.8" stroke-linejoin="miter" stroke-linecap="butt" stroke-miterlimit="16"/>
<polyline points="1786.2,796.5 1789.2,700.0 1789.9,646.9 1791.6,586.7 1796.6,545.8 1801.5,540.1 1807.7,538.4 1812.7,550.3 1818.4,544.1 1823.8,559.4 1828.8,579.3 1831.2,590.0 1835.4,601.4 1839.7,619.9 1844.0,632.7 1850.4,639.1 1855.1,661.1 1859.6,664.0 1865.6,670.4 1876.0,659.7 1881.0,636.9 1886.6,633.4 1893.0,639.1 1898.0,643.8 1905.1,664.0 1912.2,681.0 1918.4,703.6 1923.6,703.6 1929.1,706.8 1934.0,707.6 1939.0,703.6 1945.2,694.5 1950.6,697.7 1961.3,713.0 1966.2,724.2 1971.2,728.4 1976.2,742.8 1982.3,755.1 1988.5,730.4 1993.3,700.0 1996.2,675.3 2002.6,642.6 2007.8,628.4 2014.0,635.5 2017.5,656.9 2020.4,675.3 2022.5,700.0 2024.5,722.2" fill="none" stroke="rgba(255,255,255,0.78)" stroke-width="3.8" stroke-linejoin="miter" stroke-linecap="butt" stroke-miterlimit="16"/>
<polyline points="259.3,758.8 264.4,775.2 270.1,756.3 272.6,722.1 275.2,684.7" fill="none" stroke="#fdec8e" stroke-width="3.8" stroke-linejoin="miter" stroke-linecap="butt" stroke-miterlimit="24"/>
<polyline points="1664.7,859.0 1675.4,927.5 1680.6,891.8 1686.1,814.1" fill="none" stroke="#fdec8e" stroke-width="3.8" stroke-linejoin="miter" stroke-linecap="butt" stroke-miterlimit="24"/>
</g>
<text x="166.6" y="1630.2" font-size="24.5" fill="#cfcfcf" text-anchor="start" opacity="0.995" font-weight="normal" font-style="normal" textLength="257.3" lengthAdjust="spacingAndGlyphs" stroke="#cfcfcf" stroke-width="0.3">Lead vox High Chorus(3)</text>
<text x="1854.8" y="565.6" font-size="24.5" fill="#ffffff" text-anchor="start" opacity="0.995" font-weight="normal" font-style="normal" textLength="101" lengthAdjust="spacingAndGlyphs" stroke="#fff" stroke-width="0.5">-37.06dB</text>
<rect x="2090" y="538.4" width="28" height="951" rx="6" fill="#9dbad0"/>
<rect x="665" y="1676.2" width="1184.5" height="5.6" fill="#a9a9a9"/>
<rect x="665" y="1676.2" width="2.6" height="59.4" fill="#fdf3a0"/>
<rect x="1848" y="1676.2" width="1.8" height="59.4" fill="#6f93ad"/>
<polygon points="1958.1,48 1969.8,48 1970.8,58.6 1972.9,60.4 1972.9,62.3 1955,62.3 1955,60.4 1957.1,58.6" fill="#b1b1b1"/>
<rect x="1963" y="62" width="2" height="7.9" fill="#b1b1b1"/>
<polygon points="2011.8,54 2015.8,58 2026,48 2032,54 2021.9,64.1 2026,68.2 2011.8,68.2" fill="#b1b1b1"/>
<polygon points="2057.8,48 2065.8,48 2065.8,62.2 2080.2,62.2 2080.2,70 2057.8,70" fill="#b1b1b1"/>
<rect x="2070.1" y="43.9" width="13.9" height="13.9" fill="#b1b1b1"/>
<path d="M2114.6,50.6 L2129.2,65.6 M2129.2,50.6 L2114.6,65.6" stroke="#b1b1b1" stroke-width="4.9" stroke-linecap="round"/>
<polyline points="1281.7,118.2 1289.4,126.2 1297.2,118.2" fill="none" stroke="#e2e2e2" stroke-width="2.7" stroke-linecap="round" stroke-linejoin="round"/>
<line x1="1334" y1="110.8" x2="1366" y2="110.8" stroke="#e2e2e2" stroke-width="3" stroke-linecap="round"/>
<circle cx="1347.2" cy="110.8" r="3.6" fill="#515557" stroke="#e2e2e2" stroke-width="2.4"/>
<line x1="1334" y1="121.4" x2="1366" y2="121.4" stroke="#e2e2e2" stroke-width="3" stroke-linecap="round"/>
<circle cx="1356.3" cy="121.4" r="3.6" fill="#515557" stroke="#e2e2e2" stroke-width="2.4"/>
<line x1="1334" y1="132.2" x2="1366" y2="132.2" stroke="#e2e2e2" stroke-width="2.2" stroke-linecap="round"/>
<circle cx="1343.1" cy="132.2" r="3.6" fill="#515557" stroke="#e2e2e2" stroke-width="2.4"/>
<circle cx="1433" cy="121.4" r="16.3" fill="#6bf04a"/>
<polyline points="1425,122 1431.6,128.2 1442.1,116.9" fill="none" stroke="#272b2f" stroke-width="3.2" stroke-linecap="round" stroke-linejoin="round"/>
<path d="M1534.5,116.4 A12.1,12.1 0 1 1 1536.2,131.3" fill="none" stroke="#d9d9d9" stroke-width="4.5" stroke-linecap="round"/>
<polyline points="1529.9,108.2 1529.9,118.4 1540.2,118.4" fill="none" stroke="#d9d9d9" stroke-width="4.5" stroke-linecap="round" stroke-linejoin="round"/>
<path d="M1633.6,116.4 A12.1,12.1 0 1 0 1631.9,131.3" fill="none" stroke="#d9d9d9" stroke-width="4.5" stroke-linecap="round"/>
<polyline points="1638.2,108.2 1638.2,118.4 1627.9,118.4" fill="none" stroke="#d9d9d9" stroke-width="4.5" stroke-linecap="round" stroke-linejoin="round"/>
<rect x="1729.6" y="109" width="27.6" height="24.5" rx="1.5" fill="none" stroke="#fff" stroke-width="4"/>
<rect x="1737" y="109" width="4" height="24.5" fill="#fff"/><rect x="1746.2" y="109" width="4" height="24.5" fill="#fff"/>
<path d="M1830.2,111.8 A11.8,11.8 0 1 1 1817.6,111.8" fill="none" stroke="#fff" stroke-width="3.8" stroke-linecap="round"/>
<line x1="1823.9" y1="108.6" x2="1823.9" y2="121.8" stroke="#fff" stroke-width="3.8" stroke-linecap="round"/>
<path d="M1915,112.2 V111.4 Q1915,109.4 1913,109.4 H1886.6 Q1884.6,109.4 1884.6,111.4 V126.6 Q1884.6,128.6 1886.6,128.6 H1903.6" fill="none" stroke="#e8311f" stroke-width="2.3" stroke-linecap="round"/>
<rect x="1907.2" y="124.5" width="17.5" height="11.5" rx="2.6" fill="#e8311f"/>
<path d="M1911.5,125.5 V121.6 A4.5,4.5 0 0 1 1920.5,121.6 V125.5" fill="none" stroke="#e8311f" stroke-width="2.7"/>
<circle cx="2024.4" cy="121.5" r="11.6" fill="#d9d9d9"/><rect x="2019.8" y="105.2" width="9.2" height="7.7" rx="2.2" fill="#d9d9d9" transform="rotate(0.0 2024.4 121.5)"/><rect x="2019.8" y="105.2" width="9.2" height="7.7" rx="2.2" fill="#d9d9d9" transform="rotate(60.0 2024.4 121.5)"/><rect x="2019.8" y="105.2" width="9.2" height="7.7" rx="2.2" fill="#d9d9d9" transform="rotate(120.0 2024.4 121.5)"/><rect x="2019.8" y="105.2" width="9.2" height="7.7" rx="2.2" fill="#d9d9d9" transform="rotate(180.0 2024.4 121.5)"/><rect x="2019.8" y="105.2" width="9.2" height="7.7" rx="2.2" fill="#d9d9d9" transform="rotate(240.0 2024.4 121.5)"/><rect x="2019.8" y="105.2" width="9.2" height="7.7" rx="2.2" fill="#d9d9d9" transform="rotate(300.0 2024.4 121.5)"/><circle cx="2024.4" cy="121.5" r="4.7" fill="#272b2f"/>
<path d="M2094.6,114.4 C2094.6,105.2 2112.4,105.2 2112.4,114.6 C2112.4,121.8 2103.4,120.4 2103.4,127.8" fill="none" stroke="#d9d9d9" stroke-width="4.4" stroke-linecap="round"/>
<circle cx="2103.4" cy="134.9" r="3" fill="#d9d9d9"/>
<polyline points="545.5,197.7 553.3,206.1 561.0,197.7" fill="none" stroke="#d6e3ee" stroke-width="3.0" stroke-linecap="round" stroke-linejoin="round"/>
<g transform="translate(612.4,203) rotate(45)"><path d="M-7.4,-5.4 V1.6 A7.4,7.4 0 0 0 7.4,1.6 V-5.4" fill="none" stroke="#fff" stroke-width="7.4"/><rect x="-11.1" y="-10.6" width="7.4" height="3.8" rx="1.4" fill="#fff"/><rect x="3.7" y="-10.6" width="7.4" height="3.8" rx="1.4" fill="#fff"/></g>
<path d="M718.8,190.9 C722.8,196 722.5,212.2 728.2,212.2 C733.6,212.2 735.8,194.6 741.2,194.6 C745.4,194.6 745,206.6 748.2,206.6 C752.2,206.6 753.5,190.2 758.8,190.2 C765.5,190.2 763,212.8 769.2,212.8" fill="none" stroke="#b2c9da" stroke-width="5.3" stroke-linecap="round" stroke-linejoin="round"/>
<polyline points="818.4,201.8 823.9,199.8 828.1,190.2 827.7,213.2 835.6,191.1 835.3,212.6 844.1,193.6 844.3,209.9 852.3,197.4 851.8,206.0 859.5,200.8 864.0,201.3 869.2,201.1" fill="none" stroke="#fff" stroke-width="4.8" stroke-linecap="round" stroke-linejoin="round"/>
<polygon points="964.3,188.6 964.3,211.6 969.8,206.9 973.9,214.1 977.4,212.4 973.6,205.1 982.3,204.9" fill="#fff" stroke="#fff" stroke-width="2.6" stroke-linejoin="round"/>
<path d="M1044.2,211.4 L1051.4,205.6 M1060,190.4 L1052.6,198.4 C1049.4,202 1054.6,207.2 1058.2,204 L1066,196.6" fill="none" stroke="#4f89af" stroke-width="5.7" stroke-linecap="round" stroke-linejoin="round"/>
<g transform="translate(1133.6,202.6) rotate(45)" fill="#b2c9da"><rect x="-4.9" y="-18.3" width="9.8" height="5" rx="1.8"/><polygon points="-4.9,-12.2 4.9,-12.2 4.9,9.6 0,18.6 -4.9,9.6"/><polygon points="-1.3,13.2 1.3,13.2 0,15.8" fill="#3d79a2"/></g>
<g transform="translate(1213.9,201.5) rotate(45) scale(0.93,0.9)"><rect x="-5.6" y="-19.4" width="11.2" height="7.4" rx="2" fill="#b2c9da"/><path d="M-6.6,-10.6 H6.6 L10.4,0.6 L0.9,19.6 V4.2 A2.6,2.6 0 1 0 -0.9,4.2 V19.6 L-10.4,0.6 Z" fill="#b2c9da"/></g>
<path d="M1299.6,190.2 C1302.2,187.8 1306.4,190.2 1304.8,193.8 L1296.4,205.8 L1289,202.6 Z" fill="#b2c9da"/><path d="M1288,204.2 L1294.6,207.2 C1292.2,212 1285.5,214.2 1279.6,214 C1284,211.6 1286.4,208.6 1288,204.2 Z" fill="#b2c9da"/><line x1="1291.5" y1="213.2" x2="1308" y2="213.2" stroke="#b2c9da" stroke-width="1.8" stroke-dasharray="4.2 1.6"/>
<polyline points="1356.0,201.0 1358.5,206.0 1360.4,188.5 1362.4,214.0 1364.8,191.0 1367.0,212.5 1369.4,194.0 1371.6,210.5 1374.0,192.5 1376.4,211.5 1378.6,196.0 1380.4,207.0" fill="none" stroke="#4f89af" stroke-width="3" stroke-linecap="round" stroke-linejoin="round"/>
<line x1="1381" y1="188.6" x2="1381" y2="214.6" stroke="#4f89af" stroke-width="3.2" stroke-linecap="round"/>
<line x1="1385" y1="201.2" x2="1391.4" y2="201.2" stroke="#4f89af" stroke-width="1.5" stroke-linecap="round"/><polyline points="1388.8,203.7 1391.4,201.2 1388.8,198.7" fill="none" stroke="#4f89af" stroke-width="1.5" stroke-linecap="round" stroke-linejoin="round"/>
<circle cx="1450.6" cy="198.2" r="8.7" fill="none" stroke="#b2c9da" stroke-width="4.1"/><line x1="1456.8" y1="204.4" x2="1466.2" y2="213.8" stroke="#b2c9da" stroke-width="4.1" stroke-linecap="round"/>
<g transform="rotate(0 1577.95 201.5)"><polygon points="1573.55,193.30 1577.95,188.30 1582.35,193.30" fill="#fff" stroke="#fff" stroke-width="2" stroke-linejoin="round"/><line x1="1577.95" y1="193.00" x2="1577.95" y2="196.50" stroke="#fff" stroke-width="3.55" stroke-linecap="round"/></g>
<g transform="rotate(90 1577.95 201.5)"><polygon points="1573.55,193.30 1577.95,188.30 1582.35,193.30" fill="#fff" stroke="#fff" stroke-width="2" stroke-linejoin="round"/><line x1="1577.95" y1="193.00" x2="1577.95" y2="196.50" stroke="#fff" stroke-width="3.55" stroke-linecap="round"/></g>
<g transform="rotate(180 1577.95 201.5)"><polygon points="1573.55,193.30 1577.95,188.30 1582.35,193.30" fill="#fff" stroke="#fff" stroke-width="2" stroke-linejoin="round"/><line x1="1577.95" y1="193.00" x2="1577.95" y2="196.50" stroke="#fff" stroke-width="3.55" stroke-linecap="round"/></g>
<g transform="rotate(270 1577.95 201.5)"><polygon points="1573.55,193.30 1577.95,188.30 1582.35,193.30" fill="#fff" stroke="#fff" stroke-width="2" stroke-linejoin="round"/><line x1="1577.95" y1="193.00" x2="1577.95" y2="196.50" stroke="#fff" stroke-width="3.55" stroke-linecap="round"/></g>
<polyline points="2083.6,202.2 2088.4,187.2 2088.2,216.2 2094.7,191.6 2094.9,212.1 2101.4,194.3 2101.4,209.2 2106.0,201.9" fill="none" stroke="#e9eff5" stroke-width="4.1" stroke-linecap="round" stroke-linejoin="round"/>
<line x1="2119.7" y1="197.2" x2="2119.7" y2="188.6" stroke="#e9eff5" stroke-width="1.9" stroke-linecap="round"/><polyline points="2123.7,192.8 2119.7,188.6 2115.7,192.8" fill="none" stroke="#e9eff5" stroke-width="1.9" stroke-linecap="round" stroke-linejoin="round"/>
<line x1="2119.7" y1="206.4" x2="2119.7" y2="215" stroke="#e9eff5" stroke-width="1.9" stroke-linecap="round"/><polyline points="2115.7,210.8 2119.7,215 2123.7,210.8" fill="none" stroke="#e9eff5" stroke-width="1.9" stroke-linecap="round" stroke-linejoin="round"/>
<circle cx="2101.2" cy="344.4" r="9.5" fill="none" stroke="#e9eff5" stroke-width="4.9"/><line x1="2107.9" y1="351.2" x2="2114" y2="357.4" stroke="#e9eff5" stroke-width="4.9" stroke-linecap="round"/>
<line x1="2102" y1="326.5" x2="2102" y2="318.6" stroke="#e9eff5" stroke-width="2.6" stroke-linecap="round"/><polyline points="2105.1,322.0 2102,318.6 2098.9,322.0" fill="none" stroke="#e9eff5" stroke-width="2.6" stroke-linecap="round" stroke-linejoin="round"/>
<line x1="2102" y1="364.2" x2="2102" y2="372.2" stroke="#e9eff5" stroke-width="2.6" stroke-linecap="round"/><polyline points="2098.9,368.8 2102,372.2 2105.1,368.8" fill="none" stroke="#e9eff5" stroke-width="2.6" stroke-linecap="round" stroke-linejoin="round"/>
<rect x="154.5" y="1704.4" width="33.4" height="4.6" fill="#b2c9da"/>
<path d="M161.5,1687.4 L171.2,1703.6 L180.9,1687.4 M161.5,1726.4 L171.2,1710 L180.9,1726.4" fill="none" stroke="#b2c9da" stroke-width="5.6" stroke-linejoin="miter"/>
<polyline points="1924.2,1702.4 1928.8,1688.0 1928.6,1715.8 1934.9,1692.2 1935.1,1711.9 1941.4,1694.8 1941.4,1709.1 1945.8,1702.1" fill="none" stroke="#e9eff5" stroke-width="3.9" stroke-linecap="round" stroke-linejoin="round"/>
<line x1="1959.6" y1="1699.8" x2="1959.6" y2="1691.6" stroke="#e9eff5" stroke-width="1.9" stroke-linecap="round"/><polyline points="1963.6,1695.8 1959.6,1691.6 1955.6,1695.8" fill="none" stroke="#e9eff5" stroke-width="1.9" stroke-linecap="round" stroke-linejoin="round"/>
<line x1="1959.6" y1="1707.6" x2="1959.6" y2="1715.8" stroke="#e9eff5" stroke-width="1.9" stroke-linecap="round"/><polyline points="1955.6,1711.6 1959.6,1715.8 1963.6,1711.6" fill="none" stroke="#e9eff5" stroke-width="1.9" stroke-linecap="round" stroke-linejoin="round"/>
<circle cx="2023.4" cy="1702.8" r="8.7" fill="none" stroke="#e9eff5" stroke-width="4.8"/><line x1="2029.6" y1="1708.9" x2="2036.6" y2="1715.8" stroke="#e9eff5" stroke-width="4.8" stroke-linecap="round"/>
<line x1="2004" y1="1703.8" x2="1996.6" y2="1703.8" stroke="#e9eff5" stroke-width="2.7" stroke-linecap="round"/><polyline points="1999.8,1700.8 1996.6,1703.8 1999.8,1706.8" fill="none" stroke="#e9eff5" stroke-width="2.7" stroke-linecap="round" stroke-linejoin="round"/>
<line x1="2044.5" y1="1703.8" x2="2052.4" y2="1703.8" stroke="#e9eff5" stroke-width="2.7" stroke-linecap="round"/><polyline points="2049.2,1706.8 2052.4,1703.8 2049.2,1700.8" fill="none" stroke="#e9eff5" stroke-width="2.7" stroke-linecap="round" stroke-linejoin="round"/>
<polygon points="676.0,1705.5 697.7,1705.0 710.4,1702.8 717.3,1701.0 723.2,1701.8 731.1,1700.6 742.9,1699.6 750.8,1700.6 760.6,1700.2 771.5,1699.5 778.3,1701.0 789.2,1703.6 800.0,1705.0 818.8,1705.3 850.0,1705.3 862.0,1703.6 872.0,1701.4 884.0,1701.8 896.0,1701.2 904.0,1699.4 912.0,1697.2 919.0,1696.0 925.0,1698.8 932.0,1702.6 940.0,1705.0 955.0,1705.0 966.0,1702.4 976.0,1698.6 984.0,1700.2 996.0,1701.6 1008.0,1702.6 1020.0,1703.2 1034.0,1701.4 1048.0,1699.4 1058.0,1700.8 1072.0,1701.0 1084.0,1702.6 1096.0,1702.4 1110.0,1701.6 1122.0,1700.6 1134.0,1701.6 1146.0,1700.8 1156.0,1698.2 1166.0,1699.8 1178.0,1702.0 1190.0,1703.2 1200.0,1702.6 1210.0,1701.4 1222.0,1699.4 1232.0,1701.0 1242.0,1703.2 1252.0,1704.2 1262.0,1705.2 1285.0,1705.2 1296.0,1703.6 1306.0,1702.6 1316.0,1703.4 1326.0,1701.2 1338.0,1700.2 1350.0,1701.4 1362.0,1700.6 1372.0,1702.0 1384.0,1703.8 1394.0,1705.0 1412.0,1705.1 1424.0,1703.2 1436.0,1701.2 1448.0,1700.8 1458.0,1702.2 1470.0,1700.8 1480.0,1701.2 1492.0,1702.4 1504.0,1700.6 1510.0,1700.2 1522.0,1702.0 1534.0,1703.2 1548.0,1703.8 1560.0,1702.2 1570.0,1701.0 1582.0,1702.0 1594.0,1701.6 1606.0,1702.2 1618.0,1702.0 1630.0,1700.6 1640.0,1699.8 1650.0,1701.6 1664.0,1702.6 1676.0,1703.6 1688.0,1702.4 1700.0,1701.8 1712.0,1702.6 1724.0,1702.0 1736.0,1701.0 1748.0,1700.6 1760.0,1701.6 1772.0,1702.2 1780.0,1700.0 1790.0,1699.8 1800.0,1701.4 1812.0,1702.6 1824.0,1703.6 1832.0,1704.4 1838.0,1704.8 1842.0,1703.8 1845.0,1705.2 1845.0,1706.4 1842.0,1707.8 1838.0,1706.8 1832.0,1707.2 1824.0,1708.0 1812.0,1709.0 1800.0,1710.2 1790.0,1711.8 1780.0,1711.6 1772.0,1709.4 1760.0,1710.0 1748.0,1711.0 1736.0,1710.6 1724.0,1709.6 1712.0,1709.0 1700.0,1709.8 1688.0,1709.2 1676.0,1708.0 1664.0,1709.0 1650.0,1710.0 1640.0,1711.8 1630.0,1711.0 1618.0,1709.6 1606.0,1709.4 1594.0,1710.0 1582.0,1709.6 1570.0,1710.6 1560.0,1709.4 1548.0,1707.8 1534.0,1708.4 1522.0,1709.6 1510.0,1711.4 1504.0,1711.0 1492.0,1709.2 1480.0,1710.4 1470.0,1710.8 1458.0,1709.4 1448.0,1710.8 1436.0,1710.4 1424.0,1708.4 1412.0,1706.5 1394.0,1706.6 1384.0,1707.8 1372.0,1709.6 1362.0,1711.0 1350.0,1710.2 1338.0,1711.4 1326.0,1710.4 1316.0,1708.2 1306.0,1709.0 1296.0,1708.0 1285.0,1706.4 1262.0,1706.4 1252.0,1707.4 1242.0,1708.4 1232.0,1710.6 1222.0,1712.2 1210.0,1710.2 1200.0,1709.0 1190.0,1708.4 1178.0,1709.6 1166.0,1711.8 1156.0,1713.4 1146.0,1710.8 1134.0,1710.0 1122.0,1711.0 1110.0,1710.0 1096.0,1709.2 1084.0,1709.0 1072.0,1710.6 1058.0,1710.8 1048.0,1712.2 1034.0,1710.2 1020.0,1708.4 1008.0,1709.0 996.0,1710.0 984.0,1711.4 976.0,1713.0 966.0,1709.2 955.0,1706.6 940.0,1706.6 932.0,1709.0 925.0,1712.8 919.0,1715.6 912.0,1714.4 904.0,1712.2 896.0,1710.4 884.0,1709.8 872.0,1710.2 862.0,1708.0 850.0,1706.3 818.8,1706.3 800.0,1706.6 789.2,1708.0 778.3,1710.6 771.5,1712.1 760.6,1711.4 750.8,1711.0 742.9,1712.0 731.1,1711.0 723.2,1709.8 717.3,1710.6 710.4,1708.8 697.7,1706.6 676.0,1706.1" fill="#9dbad0"/>
<rect x="1004.4" y="1677.6" width="243" height="56.6" rx="4.5" fill="#ffffff" fill-opacity="0.5"/>
<circle cx="1011.7" cy="1705.8" r="4.3" fill="#9aa5ab"/><circle cx="1239.4" cy="1705.8" r="4.3" fill="#9aa5ab"/>
</svg>
</body></html>
